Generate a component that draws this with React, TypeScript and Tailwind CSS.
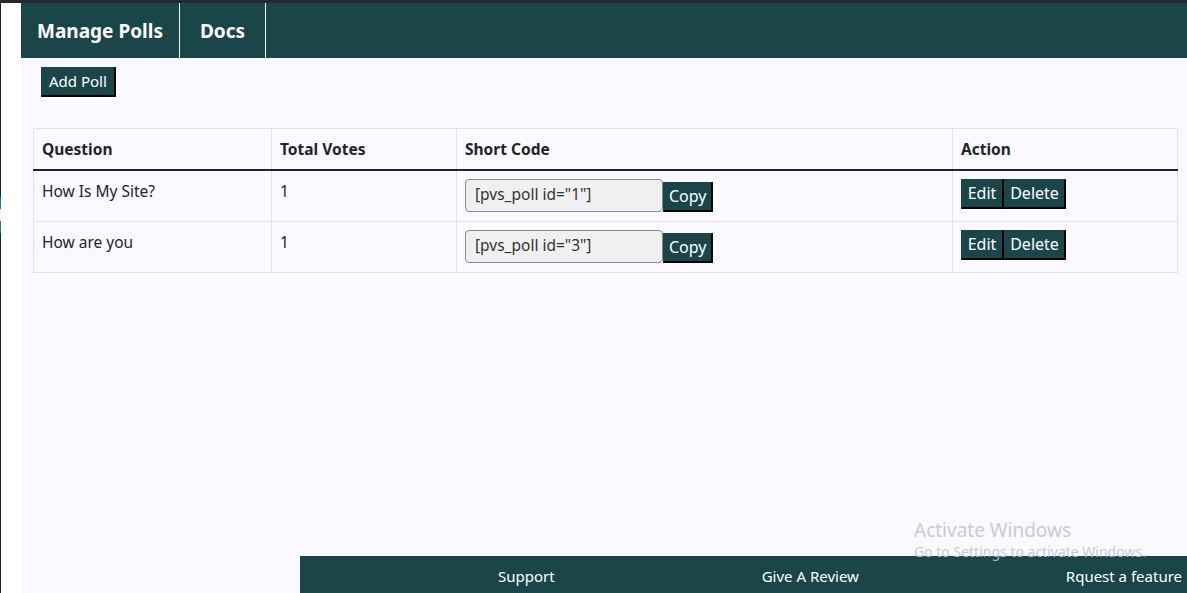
const polls = [
  { id: 1, question: 'How Is My Site?', votes: 1 },
  { id: 3, question: 'How are you', votes: 1 },
];

const btn =
  'bg-[#1b4649] text-white leading-none border-r-2 border-b-2 border-black border-t border-l border-t-[#1b4649] border-l-[#1b4649]';

export default function App() {
  return (
    <div
      className="relative h-[593px] w-[1187px] overflow-hidden bg-[#faf9ff] text-[#212529]"
      style={{ fontFamily: '"Noto Sans", "Open Sans", sans-serif' }}
    >
      <div className="h-[3px] bg-[#23282d]" />
      <div className="flex h-[590px]">
        {/* admin sidebar edge */}
        <div className="flex w-[21px] shrink-0">
          <div className="flex w-px flex-col bg-[#1d2327]">
            <div className="h-[194px]" />
            <div className="h-[12px] bg-[#2271b1]" />
            <div className="h-[12px] bg-[#f0f0f1]" />
            <div className="h-[12px] bg-[#2271b1]" />
          </div>
          <div className="flex-1 bg-white" />
        </div>

        <div className="flex flex-1 flex-col">
          <nav className="flex h-[55px] bg-[#1b4649] text-white">
            <div className="flex w-[159px] items-center justify-center border-r border-white pt-[2px] text-[19px] font-bold">
              Manage Polls
            </div>
            <div className="flex w-[86px] items-center justify-center border-r border-white pt-[2px] text-[19px] font-bold">
              Docs
            </div>
          </nav>

          <div className="pl-[20px] pt-[9px]">
            <button className={`${btn} h-[30px] px-[7px] text-[15px]`}>Add Poll</button>
          </div>

          <div className="pl-[12px] pr-[9px] pt-[31px]">
            <table className="w-full border-collapse border border-[#dee2e6] text-[15.5px]">
              <thead>
                <tr className="h-[41px] border-b-2 border-[#212529] text-left">
                  <th className="w-[238px] border-r border-[#dee2e6] px-[8px] pt-[1px] font-bold">Question</th>
                  <th className="w-[185px] border-r border-[#dee2e6] px-[8px] pt-[1px] font-bold">Total Votes</th>
                  <th className="w-[496px] border-r border-[#dee2e6] px-[8px] pt-[1px] font-bold">Short Code</th>
                  <th className="px-[8px] pt-[1px] font-bold">Action</th>
                </tr>
              </thead>
              <tbody>
                {polls.map((p) => (
                  <tr key={p.id} className="h-[51.5px] border-b border-[#dee2e6] align-top">
                    <td className="border-r border-[#dee2e6] px-[8px] pt-[9px]">{p.question}</td>
                    <td className="border-r border-[#dee2e6] px-[8px] pt-[9px]">{p.votes}</td>
                    <td className="border-r border-[#dee2e6] px-[8px] pt-[8px]">
                      <div className="flex items-end">
                        <div className="flex h-[33px] w-[198px] items-center rounded-[4px] border border-[#8a8a8a] bg-[#f0f0f0] px-[9px] text-[#333]">
                          [pvs_poll id="{p.id}"]
                        </div>
                        <button className={`${btn} h-[30px] px-[5px] text-[16px]`}>Copy</button>
                      </div>
                    </td>
                    <td className="px-[8px] pt-[8px]">
                      <div className="flex">
                        <button className={`${btn} h-[30px] w-[43px] text-[16px]`}>Edit</button>
                        <button className={`${btn} h-[30px] w-[62px] text-[16px]`}>Delete</button>
                      </div>
                    </td>
                  </tr>
                ))}
              </tbody>
            </table>
          </div>

          <div className="flex-1" />

          <footer className="ml-[279px] flex h-[37px] items-center gap-[207px] bg-[#1b4649] pl-[198px] pt-[4px] text-[15px] text-white whitespace-nowrap">
            <span>Support</span>
            <span>Give A Review</span>
            <span>Rquest a feature</span>
          </footer>
        </div>
      </div>

      <div className="pointer-events-none absolute left-[914px] top-[519px] leading-tight text-[#c4c4c8]/90">
        <div className="text-[19px]">Activate Windows</div>
        <div className="text-[14px]">Go to Settings to activate Windows.</div>
      </div>
    </div>
  );
}
